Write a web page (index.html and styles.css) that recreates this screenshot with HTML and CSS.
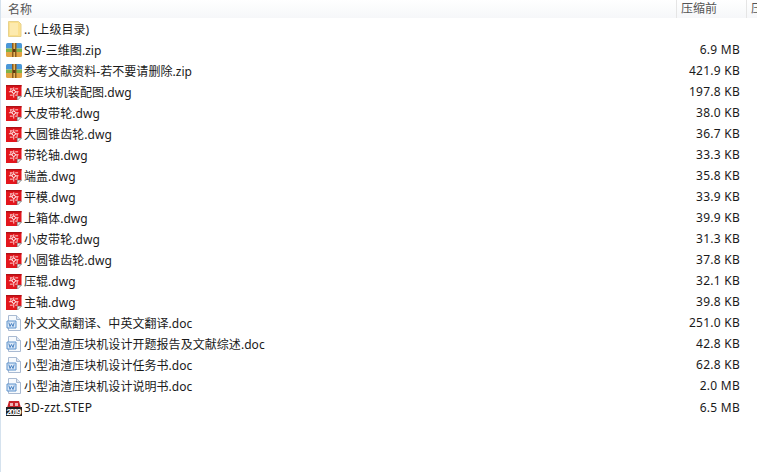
FILE: index.html
```html
<!DOCTYPE html>
<html lang="zh">
<head>
<meta charset="utf-8">
<title>压缩文件</title>
<link rel="stylesheet" href="styles.css">
</head>
<body>
<svg class="defs" width="0" height="0" aria-hidden="true">
  <symbol id="folder" viewBox="0 0 16 16">
    <path d="M2.500 .5H12.500L15 3V15.500H2.500Z" fill="#fbe08f" stroke="#e8d28c"/>
    <path d="M4 2H12V14H4Z" fill="#fdeaae"/>
  </symbol>
  <symbol id="zip" viewBox="0 0 16 16">
    <path d="M0 2.500Q0 1 1.500 1H14.500Q16 1 16 2.500V6.500H0Z" fill="#4a97d8"/>
    <path d="M0 6.500H16V10H0Z" fill="#7fb24a"/>
    <path d="M0 10H16V13.500Q16 15 14.500 15H1.500Q0 15 0 13.500Z" fill="#e3a544"/>
    <path d="M6 1H10.500V15H6Z" fill="#8d5a1e"/>
    <path d="M7.500 1H9V15H7.500Z" fill="#e4b65a"/>
    <path d="M7 7H9.500V10H7Z" fill="#5a3d10"/>
  </symbol>
  <symbol id="dwg" viewBox="0 -1 16.500 16.500">
    <path d="M0 0H16V11L11 16H0Z" fill="#e3161d"/>
    <path d="M0 0H16V1.500H0Z" fill="#b01015"/>
    <path d="M16 11.500L11.500 16V11.500Z" fill="#f4f4f4" stroke="#555" stroke-width=".6"/>
    <path d="M8 2.500V13M3 7H13M4 4H7M9.500 4H12.500M4 10.500H7M5 4V7M11.500 7V10M9.500 10.500H12" fill="none" stroke="#ffd9d9" stroke-width="1"/>
    <circle cx="8" cy="7" r="1.700" fill="#e3161d" stroke="#fff"/>
  </symbol>
  <symbol id="doc" viewBox="0 0 16 16">
    <path d="M2.500 .5H10.500L14.500 4.500V15.500H2.500Z" fill="#f7fafd" stroke="#a9bad2"/>
    <path d="M10.500 .5V4.500H14.500" fill="#dfe8f3" stroke="#a9bad2"/>
    <path d="M1 6H10V13H1Z" fill="#dbe8f7" stroke="#5d92cc"/>
    <path d="M2.800 7.500L4 11.500L5.500 8.500L7 11.500L8.200 7.500" fill="none" stroke="#4b83c2"/>
  </symbol>
  <symbol id="step" viewBox="0 0 16 16">
    <path d="M1 8L3 1H13L15 8Z" fill="#c9242b"/>
    <path d="M4 3H7V6H4ZM9 3H12V6H9Z" fill="#eeb7b9"/>
    <path d="M0 7H16V16H0Z" fill="#222"/>
  </symbol>
</svg>
<main class="list">
  <header class="head">
    <span class="col-name">名称</span>
    <span class="col-size">压缩前</span>
    <span class="col-more">压</span>
  </header>
  <div class="row"><svg class="icon"><use href="#folder"/></svg><span class="name">.. (上级目录)</span></div>
  <div class="row"><svg class="icon"><use href="#zip"/></svg><span class="name">SW-三维图.zip</span><span class="size">6.9 MB</span></div>
  <div class="row"><svg class="icon"><use href="#zip"/></svg><span class="name">参考文献资料-若不要请删除.zip</span><span class="size">421.9 KB</span></div>
  <div class="row"><svg class="icon"><use href="#dwg"/></svg><span class="name">A压块机装配图.dwg</span><span class="size">197.8 KB</span></div>
  <div class="row"><svg class="icon"><use href="#dwg"/></svg><span class="name">大皮带轮.dwg</span><span class="size">38.0 KB</span></div>
  <div class="row"><svg class="icon"><use href="#dwg"/></svg><span class="name">大圆锥齿轮.dwg</span><span class="size">36.7 KB</span></div>
  <div class="row"><svg class="icon"><use href="#dwg"/></svg><span class="name">带轮轴.dwg</span><span class="size">33.3 KB</span></div>
  <div class="row"><svg class="icon"><use href="#dwg"/></svg><span class="name">端盖.dwg</span><span class="size">35.8 KB</span></div>
  <div class="row"><svg class="icon"><use href="#dwg"/></svg><span class="name">平模.dwg</span><span class="size">33.9 KB</span></div>
  <div class="row"><svg class="icon"><use href="#dwg"/></svg><span class="name">上箱体.dwg</span><span class="size">39.9 KB</span></div>
  <div class="row"><svg class="icon"><use href="#dwg"/></svg><span class="name">小皮带轮.dwg</span><span class="size">31.3 KB</span></div>
  <div class="row"><svg class="icon"><use href="#dwg"/></svg><span class="name">小圆锥齿轮.dwg</span><span class="size">37.8 KB</span></div>
  <div class="row"><svg class="icon"><use href="#dwg"/></svg><span class="name">压辊.dwg</span><span class="size">32.1 KB</span></div>
  <div class="row"><svg class="icon"><use href="#dwg"/></svg><span class="name">主轴.dwg</span><span class="size">39.8 KB</span></div>
  <div class="row"><svg class="icon"><use href="#doc"/></svg><span class="name">外文文献翻译、中英文翻译.doc</span><span class="size">251.0 KB</span></div>
  <div class="row"><svg class="icon"><use href="#doc"/></svg><span class="name">小型油渣压块机设计开题报告及文献综述.doc</span><span class="size">42.8 KB</span></div>
  <div class="row"><svg class="icon"><use href="#doc"/></svg><span class="name">小型油渣压块机设计任务书.doc</span><span class="size">62.8 KB</span></div>
  <div class="row"><svg class="icon"><use href="#doc"/></svg><span class="name">小型油渣压块机设计说明书.doc</span><span class="size">2.0 MB</span></div>
  <div class="row row-last"><svg class="icon icon-open"><use href="#step"/><text class="year" x="0.500" y="14.800" textLength="15">2019</text></svg><span class="name name-latin">3D-zzt.STEP</span><span class="size">6.5 MB</span></div>
</main>
</body>
</html>
```

FILE: styles.css
```css
html, body {
  margin: 0;
  padding: 0;
  height: 100%;
  overflow: hidden;
  background: #fff;
}
body {
  font-family: "Noto Sans", "Noto Sans CJK SC", sans-serif;
  font-size: 12px;
  color: #1a1a1a;
}
.defs {
  position: absolute;
}
.list {
  display: flex;
  flex-direction: column;
  height: 472px;
  box-sizing: border-box;
  border-left: 1px solid #d5e2ee;
}
.head {
  display: flex;
  align-items: center;
  height: 18px;
  background: linear-gradient(#fff, #f6f7f9);
  color: #555;
}
.col-name {
  flex: 0 0 675px;
  box-sizing: border-box;
  padding-left: 7px;
}
.col-size {
  flex: 0 0 70px;
  box-sizing: border-box;
  height: 18px;
  line-height: 18px;
  padding-left: 4px;
  border-left: 1px solid #e5e5e5;
}
.col-more {
  flex: 1;
  height: 18px;
  line-height: 18px;
  padding-left: 4px;
  border-left: 1px solid #e5e5e5;
  overflow: hidden;
}
.row {
  display: flex;
  align-items: center;
  flex: 0 0 21px;
  padding-left: 5px;
}
.row-last {
  margin-top: 1px;
}
.icon {
  flex: 0 0 16px;
  width: 16px;
  height: 16px;
  margin-right: 2px;
}
.icon-open {
  overflow: visible;
}
.year {
  font-family: "Liberation Sans", sans-serif;
  font-size: 9px;
  font-weight: 700;
  fill: #fff;
}
.name {
  flex: 1;
  white-space: nowrap;
  letter-spacing: .05px;
}
.name-latin {
  letter-spacing: .25px;
}
.size {
  flex: 0 0 100px;
  box-sizing: border-box;
  padding-right: 17px;
  text-align: right;
  letter-spacing: .25px;
}
```
